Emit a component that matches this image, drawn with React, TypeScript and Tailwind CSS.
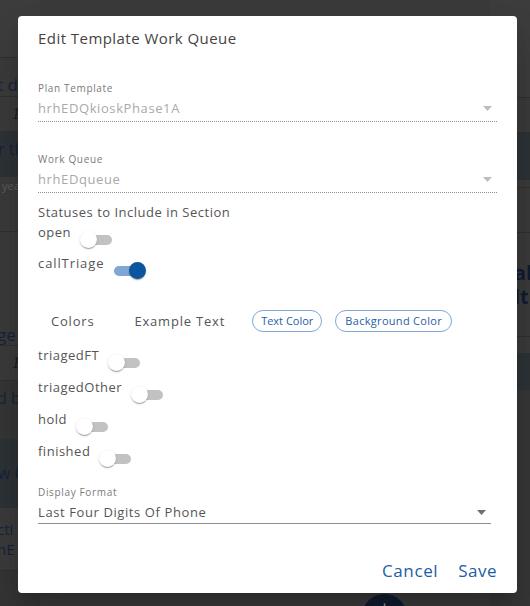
import React from "react";

const FONT = { fontFamily: '"Open Sans", "Noto Sans", sans-serif' };

function Switch({ on }: { on?: boolean }) {
  return (
    <span className="relative inline-block w-[38px] h-[17px] shrink-0">
      <span
        className={
          on
            ? "absolute left-[6px] right-[6px] top-[3.5px] h-[10px] rounded-full bg-[#7ea7d3]"
            : "absolute left-[6px] right-[6px] top-[3.5px] h-[10px] rounded-full bg-[#c2c2c2]"
        }
      />
      <span
        className={
          on
            ? "absolute top-0 left-[21px] w-[17px] h-[17px] rounded-full bg-[#0b549e] shadow-[0_2px_1px_-1px_rgba(0,0,0,0.2),0_1px_1px_0_rgba(0,0,0,0.14),0_1px_3px_0_rgba(0,0,0,0.12)]"
            : "absolute top-0 left-0 w-[17px] h-[17px] rounded-full bg-white shadow-[0_2px_1px_-1px_rgba(0,0,0,0.2),0_1px_1px_0_rgba(0,0,0,0.14),0_1px_3px_0_rgba(0,0,0,0.12)]"
        }
      />
    </span>
  );
}

function Arrow({ color }: { color: string }) {
  return (
    <svg width="9" height="5" viewBox="0 0 9 5" className="shrink-0">
      <path d="M0 0 L9 0 L4.5 5 Z" fill={color} />
    </svg>
  );
}

function StatusRow({ label, on, h = "h-[31px]" }: { label: string; on?: boolean; h?: string }) {
  return (
    <div className={`flex items-start ${h}`}>
      <span className={on ? "text-[13px] leading-[18px] tracking-[0.9px] text-[#555555]" : "text-[13px] leading-[18px] tracking-[0.5px] text-[#555555]"}>{label}</span>
      <span className={on ? "ml-[4px] mt-[7px]" : "ml-[9px] mt-[7px]"}>
        <Switch on={on} />
      </span>
    </div>
  );
}

function BgRow({ h, cls, children }: { h: string; cls?: string; children?: React.ReactNode }) {
  return <div className={`${h} ${cls ?? ""} flex items-center overflow-hidden whitespace-nowrap`}>{children}</div>;
}

export default function App() {
  return (
    <div className="relative w-[530px] h-[606px] overflow-hidden bg-[#3a3a3a]" style={FONT}>
      {/* dimmed background page */}
      <div className="flex justify-between h-full">
        <div className="w-[40px] flex flex-col">
          <BgRow h="h-[58px]" cls="border-b border-[#2f2f2f] bg-[#3c3c3c]" />
          <BgRow h="h-[39px]" cls="border-b border-[#2f2f2f] items-end">
            <span className="ml-[-3px] text-[17px] leading-[22px] text-[#15233a]">t di</span>
          </BgRow>
          <BgRow h="h-[35px]" cls="border-b border-[#2f2f2f]">
            <span className="ml-[12px] text-[16px] italic text-[#1a1a1a]" style={{ fontFamily: '"Liberation Serif", serif' }}>1</span>
          </BgRow>
          <BgRow h="h-[45px]" cls="bg-[#2c3235] items-start pt-[6px]">
            <span className="ml-[-2px] text-[16px] leading-[22px] text-[#15233a]">r th</span>
          </BgRow>
          <BgRow h="h-[55px]" cls="border-b border-[#2f2f2f] items-start">
            <span className="ml-[2px] text-[11px] leading-[18px] text-[#5c5c5c]">yea</span>
          </BgRow>
          <BgRow h="h-[114px]" cls="border-b border-[#2f2f2f] items-end">
            <span className="ml-[-3px] text-[17px] leading-[20px] text-[#15233a]">ge</span>
          </BgRow>
          <BgRow h="h-[35px]" cls="border-b border-[#2f2f2f]">
            <span className="ml-[12px] text-[16px] italic text-[#1a1a1a]" style={{ fontFamily: '"Liberation Serif", serif' }}>1</span>
          </BgRow>
          <BgRow h="h-[58px]" cls="bg-[#353535] items-start pt-[6px]">
            <span className="ml-[-3px] text-[16px] leading-[22px] text-[#15233a]">d by</span>
          </BgRow>
          <BgRow h="h-[69px]" cls="bg-[#2c3235] border-b border-[#2f2f2f]">
            <span className="ml-[-2px] text-[16px] leading-[22px] text-[#15233a]">w C</span>
          </BgRow>
          <BgRow h="h-[63px]" cls="border-b border-[#2f2f2f] flex-col items-start justify-center">
            <span className="ml-[-3px] text-[15px] leading-[20px] text-[#15233a]">cti</span>
            <span className="ml-[-3px] text-[15px] leading-[20px] text-[#15233a]">hE</span>
          </BgRow>
          <div className="flex-1 bg-[#343434]" />
        </div>
        <div className="w-[40px] flex flex-col">
          <BgRow h="h-[98px]" cls="border-b border-[#2f2f2f] bg-[#3c3c3c]" />
          <BgRow h="h-[35px]" cls="border-b border-[#2f2f2f]" />
          <BgRow h="h-[47px]" cls="bg-[#2c3235]" />
          <BgRow h="h-[8px]" cls="border-b border-[#2f2f2f]" />
          <BgRow h="h-[45px]" cls="border-b border-[#2f2f2f]" />
          <BgRow h="h-[104px]" cls="border-b border-[#2f2f2f] flex-col items-start justify-center">
            <span className="ml-[24px] text-[20px] leading-[24px] font-bold text-[#101c30]">ab</span>
            <span className="ml-[24px] text-[20px] leading-[24px] font-bold text-[#101c30]">lt</span>
          </BgRow>
          <BgRow h="h-[16px]" />
          <BgRow h="h-[37px]" cls="bg-[#2c3235]" />
          <div className="flex-1 bg-[#363636]" />
        </div>
      </div>

      {/* floating action button under dialog */}
      <div className="absolute left-[362px] top-[594px] w-[45px] h-[45px] rounded-full bg-[#0f1c2e] flex justify-center pt-[2px]">
        <span className="text-[#8a9099] text-[22px] leading-[22px]">+</span>
      </div>

      {/* dialog */}
      <div className="absolute left-[18px] top-[16px] w-[499px] h-[577px] bg-white rounded-[4px] shadow-[0_11px_15px_-7px_rgba(0,0,0,0.2),0_24px_38px_3px_rgba(0,0,0,0.14)] flex flex-col px-[20px]">
        <div className="pt-[12px] text-[15px] leading-[20px] tracking-[0.45px] font-medium text-[#434343]">Edit Template Work Queue</div>

        {/* Plan Template */}
        <div className="mt-[33px] flex flex-col border-b border-dotted border-[#8f8f8f] pb-[4px]">
          <span className="text-[10px] leading-[14px] tracking-[0.65px] text-[#7a7a7a]">Plan Template</span>
          <div className="mt-[4px] flex items-center justify-between h-[18px]">
            <span className="text-[13px] leading-[18px] tracking-[0.6px] text-[#a9a9a9]">hrhEDQkioskPhase1A</span>
            <span className="mr-[5px]"><Arrow color="#bdbdbd" /></span>
          </div>
        </div>

        {/* Work Queue */}
        <div className="mt-[30px] flex flex-col border-b border-dotted border-[#8f8f8f] pb-[4px]">
          <span className="text-[10px] leading-[14px] tracking-[0.65px] text-[#7a7a7a]">Work Queue</span>
          <div className="mt-[4px] flex items-center justify-between h-[18px]">
            <span className="text-[13px] leading-[18px] tracking-[0.6px] text-[#a9a9a9]">hrhEDqueue</span>
            <span className="mr-[5px]"><Arrow color="#bdbdbd" /></span>
          </div>
        </div>

        <div className="mt-[10px] text-[13px] leading-[18px] tracking-[0.5px] text-[#555555]">Statuses to Include in Section</div>
        <div className="mt-[2px] flex flex-col">
          <StatusRow label="open" />
          <StatusRow label="callTriage" on />
        </div>

        {/* Colors row */}
        <div className="mt-[25px] flex items-center h-[22px]">
          <span className="ml-[13px] text-[13px] leading-[18px] tracking-[0.8px] text-[#555555]">Colors</span>
          <span className="ml-[40px] text-[13px] leading-[18px] tracking-[0.8px] text-[#555555]">Example Text</span>
          <span className="ml-[27px] h-[22px] px-[8px] rounded-full border border-[#7fa8d6] text-[11px] leading-[20px] text-[#1f5fa6]">Text Color</span>
          <span className="ml-[13px] h-[22px] px-[9px] rounded-full border border-[#7fa8d6] text-[11px] leading-[20px] tracking-[0.3px] text-[#1f5fa6]">Background Color</span>
        </div>

        <div className="mt-[14px] flex flex-col">
          <StatusRow label="triagedFT" h="h-[32px]" />
          <StatusRow label="triagedOther" h="h-[32px]" />
          <StatusRow label="hold" h="h-[32px]" />
          <StatusRow label="finished" h="h-[32px]" />
        </div>

        {/* Display Format */}
        <div className="mt-[11px] mr-[6px] flex flex-col border-b border-[#8c8c8c] pb-[2px]">
          <span className="text-[10px] leading-[14px] tracking-[0.65px] text-[#7a7a7a]">Display Format</span>
          <div className="mt-[4px] flex items-center justify-between h-[18px]">
            <span className="text-[13px] leading-[18px] tracking-[0.6px] text-[#555555]">Last Four Digits Of Phone</span>
            <span className="mr-[5px]"><Arrow color="#6f6f6f" /></span>
          </div>
        </div>

        <div className="mt-auto pb-[10px] flex justify-end gap-[20px]">
          <span className="text-[17px] leading-[24px] tracking-[0.6px] text-[#1b5ea7]">Cancel</span>
          <span className="text-[17px] leading-[24px] tracking-[0.5px] text-[#1b5ea7]">Save</span>
        </div>
      </div>
    </div>
  );
}
